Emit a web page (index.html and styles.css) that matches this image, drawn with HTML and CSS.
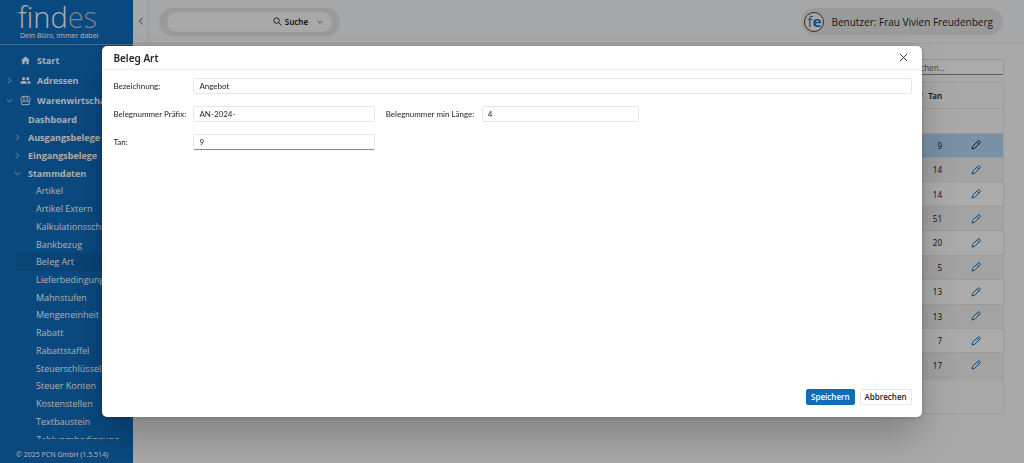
FILE: index.html
```html
<!DOCTYPE html>
<html lang="de">
<head>
    <meta charset="UTF-8">
    <meta name="viewport" content="width=device-width, initial-scale=1.0">
    <title>findes - Beleg Art</title>
    <link rel="stylesheet" href="styles.css">
</head>
<body>
    <svg class="symbols" aria-hidden="true">
        <symbol id="chevron-right" viewBox="0 0 10 10"><path d="M3 1l4 4-4 4"/></symbol>
        <symbol id="chevron-down" viewBox="0 0 10 10"><path d="M1 3l4 4 4-4"/></symbol>
        <symbol id="chevron-left" viewBox="0 0 10 10"><path d="M7 1L3 5l4 4"/></symbol>
        <symbol id="pencil" viewBox="0 0 20 20"><path d="M2 18l1.500-5.500L13.500 2.500a2.800 2.800 0 0 1 4 4L7.500 16.500zM11.500 4.500l4 4"/></symbol>
    </svg>

    <div class="app">
        <aside class="sidebar">
            <div class="brand">
                <div class="logo">find<span>es</span></div>
                <div class="slogan">Dein Büro, immer dabei</div>
            </div>
            <nav class="menu">
                <ul class="level-1">
                    <li><a href="#">
                        <svg class="menu-icon" viewBox="0 0 24 24"><path d="M10 20v-6h4v6h5v-8h3L12 3 2 12h3v8z"/></svg>Start</a></li>
                    <li><a href="#">
                        <svg class="arrow"><use href="#chevron-right"/></svg>
                        <svg class="menu-icon" viewBox="0 0 24 24"><circle cx="8" cy="8" r="3.500"/><circle cx="17" cy="8" r="3.500"/><path d="M1 19v-2c0-3 4-4 7-4s7 1 7 4v2zM17 19h6v-2c0-3-3-4-7-4 1 1 1 2 1 6z"/></svg>Adressen</a></li>
                    <li><a href="#">
                        <svg class="arrow"><use href="#chevron-down"/></svg>
                        <svg class="menu-icon outline" viewBox="0 0 24 24"><path d="M5 3h14l3 6v2a3 3 0 0 1-6.500 0 3 3 0 0 1-7 0A3 3 0 0 1 2 11V9zM4 14v7h16v-7M8.500 3v8M15.500 3v8"/></svg>Warenwirtschaft</a></li>
                </ul>
                <ul class="level-2">
                    <li><a href="#">Dashboard</a></li>
                    <li><a href="#"><svg class="arrow"><use href="#chevron-right"/></svg>Ausgangsbelege</a></li>
                    <li><a href="#"><svg class="arrow"><use href="#chevron-right"/></svg>Eingangsbelege</a></li>
                    <li><a href="#"><svg class="arrow"><use href="#chevron-down"/></svg>Stammdaten</a></li>
                </ul>
                <ul class="level-3">
                    <li><a href="#">Artikel</a></li>
                    <li><a href="#">Artikel Extern</a></li>
                    <li><a href="#">Kalkulationsschema</a></li>
                    <li><a href="#">Bankbezug</a></li>
                    <li class="active"><a href="#">Beleg Art</a></li>
                    <li><a href="#">Lieferbedingung</a></li>
                    <li><a href="#">Mahnstufen</a></li>
                    <li><a href="#">Mengeneinheit</a></li>
                    <li><a href="#">Rabatt</a></li>
                    <li><a href="#">Rabattstaffel</a></li>
                    <li><a href="#">Steuerschlüssel</a></li>
                    <li><a href="#">Steuer Konten</a></li>
                    <li><a href="#">Kostenstellen</a></li>
                    <li><a href="#">Textbaustein</a></li>
                    <li><a href="#">Zahlungsbedingung</a></li>
                </ul>
            </nav>
            <div class="copyright">© 2025 PCN GmbH (1.5.514)</div>
        </aside>

        <div class="main">
            <header class="topbar">
                <button class="collapse" type="button" aria-label="Menü einklappen"><svg><use href="#chevron-left"/></svg></button>
                <div class="search">
                    <div class="search-inner">
                        <input type="text" aria-label="Suche">
                        <button type="button">
                            <svg class="search-icon" viewBox="0 0 20 20"><circle cx="8" cy="8" r="6"/><path d="M12.500 12.500L19 19"/></svg>
                            Suche
                            <svg class="search-arrow"><use href="#chevron-down"/></svg>
                        </button>
                    </div>
                </div>
                <div class="user">
                    <span class="avatar">f<b>e</b></span>
                    <span>Benutzer: Frau Vivien Freudenberg</span>
                </div>
            </header>

            <main class="content">
                <input class="grid-search" type="text" placeholder="Suchen..." aria-label="Suchen">
                <div class="grid">
                    <table>
                        <thead>
                            <tr>
                                <th></th>
                                <th class="tan"><svg viewBox="0 0 10 10"><path d="M0 2h10M2 5h7M4 8h4"/></svg>Tan</th>
                                <th class="edit"></th>
                            </tr>
                        </thead>
                        <tbody>
                            <tr class="filter"><td></td><td></td><td></td></tr>
                            <tr class="selected"><td></td><td class="tan">9</td><td class="edit"><svg><use href="#pencil"/></svg></td></tr>
                            <tr><td></td><td class="tan">14</td><td class="edit"><svg><use href="#pencil"/></svg></td></tr>
                            <tr><td></td><td class="tan">14</td><td class="edit"><svg><use href="#pencil"/></svg></td></tr>
                            <tr><td></td><td class="tan">51</td><td class="edit"><svg><use href="#pencil"/></svg></td></tr>
                            <tr><td></td><td class="tan">20</td><td class="edit"><svg><use href="#pencil"/></svg></td></tr>
                            <tr><td></td><td class="tan">5</td><td class="edit"><svg><use href="#pencil"/></svg></td></tr>
                            <tr><td></td><td class="tan">13</td><td class="edit"><svg><use href="#pencil"/></svg></td></tr>
                            <tr><td></td><td class="tan">13</td><td class="edit"><svg><use href="#pencil"/></svg></td></tr>
                            <tr><td></td><td class="tan">7</td><td class="edit"><svg><use href="#pencil"/></svg></td></tr>
                            <tr><td></td><td class="tan">17</td><td class="edit"><svg><use href="#pencil"/></svg></td></tr>
                        </tbody>
                    </table>
                    <div class="pager"></div>
                </div>
            </main>
        </div>
    </div>

    <div class="backdrop">
        <form class="dialog" role="dialog" aria-labelledby="dialogTitle">
            <div class="dialog-header">
                <h1 id="dialogTitle">Beleg Art</h1>
                <button class="close" type="button" aria-label="Schließen"><svg viewBox="0 0 10 10"><path d="M1 1l8 8M9 1L1 9"/></svg></button>
            </div>
            <div class="dialog-body">
                <div class="field wide">
                    <label for="bezeichnung">Bezeichnung:</label>
                    <input id="bezeichnung" type="text" value="Angebot">
                </div>
                <div class="field">
                    <label for="praefix">Belegnummer Präfix:</label>
                    <input id="praefix" type="text" value="AN-2024-">
                </div>
                <div class="field second">
                    <label for="laenge">Belegnummer min Länge:</label>
                    <input id="laenge" type="text" value="4">
                </div>
                <div class="field first">
                    <label for="tan">Tan:</label>
                    <input id="tan" class="editing" type="text" value="9">
                </div>
            </div>
            <div class="dialog-footer">
                <button class="btn primary" type="submit">Speichern</button>
                <button class="btn" type="button">Abbrechen</button>
            </div>
        </form>
    </div>
</body>
</html>
```
FILE: styles.css
```css
* {
    box-sizing: border-box;
}
body {
    margin: 0;
    font-family: "Noto Sans", "Open Sans", sans-serif;
    font-size: 8px;
    color: #242424;
    background-color: #fafafa;
    overflow: hidden;
}
button,
input {
    font: inherit;
    color: inherit;
}
button {
    padding: 0;
    border: none;
    background: none;
    cursor: pointer;
}
svg {
    fill: none;
    stroke: currentColor;
    flex: none;
}
.symbols {
    display: none;
}
.app {
    display: flex;
    height: 100vh;
}

/* Seitenleiste */
.sidebar {
    width: 13%;
    flex: none;
    display: flex;
    flex-direction: column;
    color: #fff;
    background-color: #0f6cbd;
}
.brand {
    height: 45px;
    padding: 0 0 0 18px;
    border-bottom: 1px solid #6aa3d5;
    white-space: nowrap;
}
.logo {
    height: 31px;
    font-family: "Open Sans", sans-serif;
    font-size: 29px;
    font-weight: 300;
    line-height: 33px;
}
.logo span {
    color: #b8bec4;
}
.slogan {
    padding-left: 2px;
    font-size: 7px;
    line-height: 9px;
}
.menu {
    flex: 1;
    min-height: 0;
    overflow: hidden;
    padding-top: 5px;
    font-family: "Open Sans", sans-serif;
    font-size: 9px;
    white-space: nowrap;
}
.menu ul {
    margin: 0;
    padding: 0;
    list-style: none;
}
.menu a {
    position: relative;
    display: flex;
    align-items: center;
    height: 100%;
    color: inherit;
    text-decoration: none;
}
.level-1,
.level-2 {
    font-weight: 700;
}
.level-1 li {
    height: 20px;
}
.level-1 a {
    padding-left: 20px;
}
.menu-icon {
    width: 11px;
    height: 11px;
    margin-right: 6px;
    fill: currentColor;
    stroke: none;
}
.menu-icon.outline {
    fill: none;
    stroke: currentColor;
    stroke-width: 2;
}
.arrow {
    position: absolute;
    left: 6px;
    width: 7px;
    height: 7px;
}
.level-2 li {
    height: 18px;
}
.level-2 a {
    padding-left: 28px;
}
.level-2 .arrow {
    left: 14px;
}
.level-3 {
    display: grid;
    grid-auto-rows: 1fr;
    height: 266px;
}
.level-3 li {
    margin-left: 16px;
    padding-left: 20px;
    border-radius: 2px;
}
.level-3 .active {
    background-color: #0f63ad;
}
.copyright {
    padding: 11px 0 3px 16px;
    font-size: 7px;
    line-height: 10px;
}

/* Kopfzeile */
.main {
    flex: 1;
    min-width: 0;
    display: flex;
    flex-direction: column;
}
.topbar {
    display: flex;
    align-items: center;
    height: 44px;
    flex: none;
    padding-right: 21px;
    background-color: #f5f7fa;
    border-bottom: 1px solid #ebebeb;
}
.collapse {
    width: 16px;
    height: 100%;
    margin-right: 10px;
    border-right: 1px solid #e4e6e9;
}
.collapse svg {
    width: 8px;
    height: 8px;
}
.search {
    width: 181px;
    padding: 4px 8px;
    border-radius: 14px;
    background-color: #e4e4e4;
}
.search-inner {
    display: flex;
    height: 20px;
    border-radius: 10px;
    background-color: #f9f9f9;
}
.search input {
    flex: 1;
    min-width: 0;
    border: none;
    background: none;
}
.search button {
    display: flex;
    align-items: center;
    padding-right: 9px;
    font-weight: 600;
}
.search-icon {
    width: 9px;
    height: 9px;
    margin-right: 3px;
    stroke-width: 2;
}
.search-arrow {
    width: 6px;
    height: 6px;
    margin-left: 9px;
}
.user {
    display: flex;
    align-items: center;
    gap: 7px;
    height: 27px;
    margin-left: auto;
    padding: 0 10px 0 3px;
    border-radius: 14px;
    background-color: #e4e4e4;
    font-family: "Open Sans", sans-serif;
    font-size: 10px;
}
.avatar {
    width: 20px;
    height: 20px;
    border: 1px solid #444;
    border-radius: 50%;
    background-color: #f5f5f5;
    font-size: 15px;
    line-height: 17px;
    text-align: center;
    color: #666;
}
.avatar b {
    color: #0f6cbd;
}

/* Tabelle */
.content {
    display: flex;
    flex-direction: column;
    align-items: flex-end;
    gap: 7px;
    padding: 15px 20px 0 20px;
}
.grid-search {
    width: 100px;
    height: 16px;
    padding: 0 6px;
    border: 1px solid #e0e0e0;
    border-bottom-color: #888;
    border-radius: 2px;
    background-color: #fcfcfc;
}
.grid-search::placeholder {
    color: #707070;
    opacity: 1;
}
.grid {
    width: 100%;
    border: 1px solid #e6e6e6;
}
table {
    width: 100%;
    height: 295px;
    border-collapse: collapse;
    table-layout: fixed;
}
th,
td {
    padding: 0;
    border-bottom: 1px solid #e6e6e6;
}
th,
.filter td {
    height: 25px;
}
th {
    font-weight: 600;
}
tbody tr:nth-child(odd) {
    background-color: #f0f0f0;
}
tbody tr:nth-child(even) {
    background-color: #fdfdfd;
}
/* Belegzeilen: ungerade grau, gewählte Zeile blau */
tbody tr.filter {
    background-color: transparent;
}
tbody tr.selected {
    background-color: #b0d8f5;
}
.tan {
    width: 60px;
    padding-right: 7px;
    text-align: right;
}
th.tan svg {
    width: 7px;
    height: 7px;
    margin-right: 5px;
}
.edit {
    width: 54px;
    text-align: center;
    color: #0f6cbd;
}
.edit svg {
    display: block;
    width: 10px;
    height: 10px;
    margin: 0 auto;
}
.edit svg use {
    stroke-width: 2;
}
.selected .edit {
    color: #242424;
}
.pager {
    height: 34px;
    margin-top: 1px;
    border-top: 1px solid #e6e6e6;
}

/* Dialog */
.backdrop {
    position: fixed;
    inset: 0;
    display: flex;
    align-items: center;
    justify-content: center;
    background-color: rgba(0, 0, 0, 0.32);
}
.dialog {
    display: flex;
    flex-direction: column;
    width: 80%;
    height: 80%;
    border-radius: 5px;
    background-color: #fff;
    box-shadow: 0 0 5px rgba(0, 0, 0, 0.2), 0 20px 40px rgba(0, 0, 0, 0.24);
}
.dialog-header {
    display: flex;
    align-items: center;
    justify-content: space-between;
    height: 24px;
    padding: 0 14px 0 11px;
    border-bottom: 1px solid #f0f0f0;
}
.dialog-header h1 {
    margin: 0;
    font-size: 10px;
    font-weight: 600;
}
.close svg {
    display: block;
    width: 9px;
    height: 9px;
}
.dialog-body {
    flex: 1;
    display: grid;
    grid-template-columns: 34fr 33fr 34fr;
    align-content: start;
    gap: 12px 11px;
    padding: 8px 10px 8px 11px;
    font-family: Lato, "Open Sans", sans-serif;
}
.field {
    display: flex;
    align-items: center;
}
.field.wide {
    grid-column: 1 / -1;
}
.field.first {
    grid-column: 1;
}
.field label {
    width: 80px;
    flex: none;
    white-space: nowrap;
}
.field.second label {
    width: 96px;
}
.field input {
    flex: 1;
    min-width: 0;
    height: 16px;
    padding: 0 5px;
    border: 1px solid #e6e6e6;
    border-radius: 2px;
    background-color: #fff;
}
.field input.editing {
    border-bottom-color: #888;
}
.dialog-footer {
    display: flex;
    justify-content: flex-end;
    gap: 5px;
    padding: 0 10px 12px;
    font-family: "Open Sans", sans-serif;
}
.btn {
    height: 16px;
    padding: 0 4px;
    border: 1px solid #e6e6e6;
    border-radius: 2px;
    background-color: #fff;
    font-weight: 600;
}
.btn.primary {
    border-color: #0f6cbd;
    background-color: #0f6cbd;
    color: #fff;
}
```
